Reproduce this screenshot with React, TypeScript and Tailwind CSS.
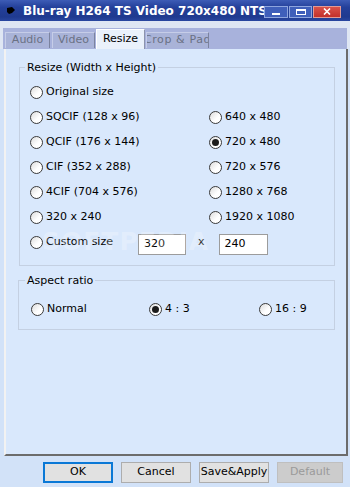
import React from "react";

function Radio({ checked, label }: { checked?: boolean; label: string }) {
  return (
    <div className="flex items-center h-[25px] whitespace-nowrap">
      <span className="w-[13px] h-[13px] rounded-full border border-[#3a3a3a] bg-[linear-gradient(135deg,#dcdcdc,#ffffff_60%)] flex items-center justify-center shrink-0">
        {checked && <span className="w-[7px] h-[7px] rounded-full bg-[#1c1c1c]" />}
      </span>
      <span className="ml-[3px]">{label}</span>
    </div>
  );
}

function Tab({ label, active, wide }: { label: string; active?: boolean; wide?: boolean }) {
  if (active) {
    return (
      <div className="h-[20px] px-[6px] mr-[1px] flex items-center bg-[#eaf1fb] border-t border-l border-r border-t-[#ffffff] border-l-[#ffffff] border-r-[#8c93ad] text-black w-[49px] justify-center">
        {label}
      </div>
    );
  }
  return (
    <div className={"h-[16px] flex items-center justify-center bg-[#a9b3d8] border-t border-l border-r border-t-[#c6cde8] border-l-[#c6cde8] border-r-[#7b839f] text-[#6a7184] mr-[1px] overflow-hidden whitespace-nowrap " + (wide ? "tracking-[0.6px]" : "")}>
      {label}
    </div>
  );
}

export default function App() {
  return (
    <div className="relative w-[350px] h-[487px] bg-[#d2e2f8] flex flex-col overflow-hidden font-['DejaVu_Sans',Verdana,sans-serif] text-[11px] text-black">
      {/* Title bar */}
      <div className="h-[21px] shrink-0 flex items-center bg-[linear-gradient(to_bottom,#3d5cb6,#24409a_35%,#1f3a8f_80%,#2a47a0)] relative">
        <svg className="ml-[6px] shrink-0" width="9" height="8" viewBox="0 0 9 8">
          <polygon points="1,1 6,0 9,3 6,6 3,7 1,5" fill="#000" />
        </svg>
        <div className="ml-[8px] w-[241px] overflow-hidden whitespace-nowrap text-white font-bold text-[12px] leading-[14px]">
          Blu-ray H264 TS Video 720x480 NTSC
        </div>
        <div className="flex items-center mt-[2px]">
          <div className="w-[24px] h-[12px] border border-[#8ea5de] bg-[#3f5fba] flex items-end justify-center pb-[2px]">
            <span className="w-[8px] h-[2px] bg-white" />
          </div>
          <div className="ml-[1px] w-[23px] h-[12px] border border-[#8ea5de] bg-[#3f5fba] flex items-center justify-center">
            <span className="w-[10px] h-[6px] border border-white border-t-2" />
          </div>
          <div className="ml-[1px] w-[28px] h-[12px] border border-[#e29a94] bg-[linear-gradient(to_bottom,#d9524a,#c1302b)] flex items-center justify-center">
            <svg width="8" height="7" viewBox="0 0 8 7">
              <path d="M1 0.5 L7 6.5 M7 0.5 L1 6.5" stroke="#fff" strokeWidth="1.6" />
            </svg>
          </div>
        </div>
      </div>

      {/* Tab area */}
      <div className="h-[28px] shrink-0 bg-[#dfe6f3] flex flex-col">
        <div className="h-[7px]" />
        <div className="ml-[3px] w-[344px] h-[21px] bg-[#a8b2dc] flex items-end pl-[2px]">
          <div className="w-[46px] mb-[1px]"><Tab label="Audio" /></div>
          <div className="ml-[1px] w-[44px] mb-[1px]"><Tab label="Video" /></div>
          <Tab label="Resize" active />
          <div className="w-[64px] mb-[1px]"><Tab label="Crop & Pad" wide /></div>
        </div>
      </div>

      {/* Panel */}
      <div className="ml-[4px] w-[344px] h-[407px] shrink-0 bg-[#d9e8fc] border-l-2 border-l-[#f2f2f2] border-r-2 border-r-[#6c6c6c] border-b-2 border-b-[#6c6c6c] flex flex-col">
        <fieldset className="ml-[13px] mt-[12px] w-[316px] border border-[#c4d0e2] pl-[10px] pt-[6px] pb-[10px]">
          <legend className="-ml-[5px] px-[2px] leading-[13px]">Resize (Width x Height)</legend>
          <div className="grid grid-cols-[179px_1fr]">
            <Radio label="Original size" />
            <div />
            <Radio label="SQCIF (128 x 96)" />
            <Radio label="640 x 480" />
            <Radio label="QCIF (176 x 144)" />
            <Radio checked label="720 x 480" />
            <Radio label="CIF (352 x 288)" />
            <Radio label="720 x 576" />
            <Radio label="4CIF (704 x 576)" />
            <Radio label="1280 x 768" />
            <Radio label="320 x 240" />
            <Radio label="1920 x 1080" />
          </div>
          <div className="flex items-center">
            <div className="w-[108px]">
              <Radio label="Custom size" />
            </div>
            <div className="mt-[3px] w-[48px] h-[21px] bg-white border border-[#9c9c9c] flex items-center pl-[5px]">320</div>
            <span className="ml-[12px]">x</span>
            <div className="ml-[14px] mt-[3px] w-[49px] h-[21px] bg-white border border-[#9c9c9c] flex items-center pl-[5px]">240</div>
          </div>
        </fieldset>

        <fieldset className="ml-[12px] mt-[8px] w-[317px] border border-[#c4d0e2] pl-[12px] pt-[10px] pb-[7px]">
          <legend className="-ml-[6px] px-[2px] leading-[13px]">Aspect ratio</legend>
          <div className="flex">
            <div className="w-[118px]"><Radio label="Normal" /></div>
            <div className="w-[110px]"><Radio checked label="4 : 3" /></div>
            <Radio label="16 : 9" />
          </div>
        </fieldset>
      </div>

      {/* Buttons */}
      <div className="mt-[6px] ml-[43px] flex gap-[8px]">
        <button className="w-[70px] h-[21px] bg-[#e1e1e1] border-2 border-[#0a78d6] flex items-center justify-center">OK</button>
        <button className="w-[70px] h-[21px] bg-[#e1e1e1] border border-[#adadad] flex items-center justify-center">Cancel</button>
        <button className="w-[70px] h-[21px] bg-[#e1e1e1] border border-[#adadad] flex items-center justify-center">Save&amp;Apply</button>
        <button className="w-[66px] h-[21px] bg-[#cccccc] border border-[#bfbfbf] text-[#9a9a9a] flex items-center justify-center">Default</button>
      </div>

      {/* Watermark */}
      <div className="absolute left-[42px] top-[229px] text-[25px] font-bold text-white/25 tracking-[1px] pointer-events-none select-none leading-[26px]">
        SOFTPEDIA
      </div>
    </div>
  );
}
